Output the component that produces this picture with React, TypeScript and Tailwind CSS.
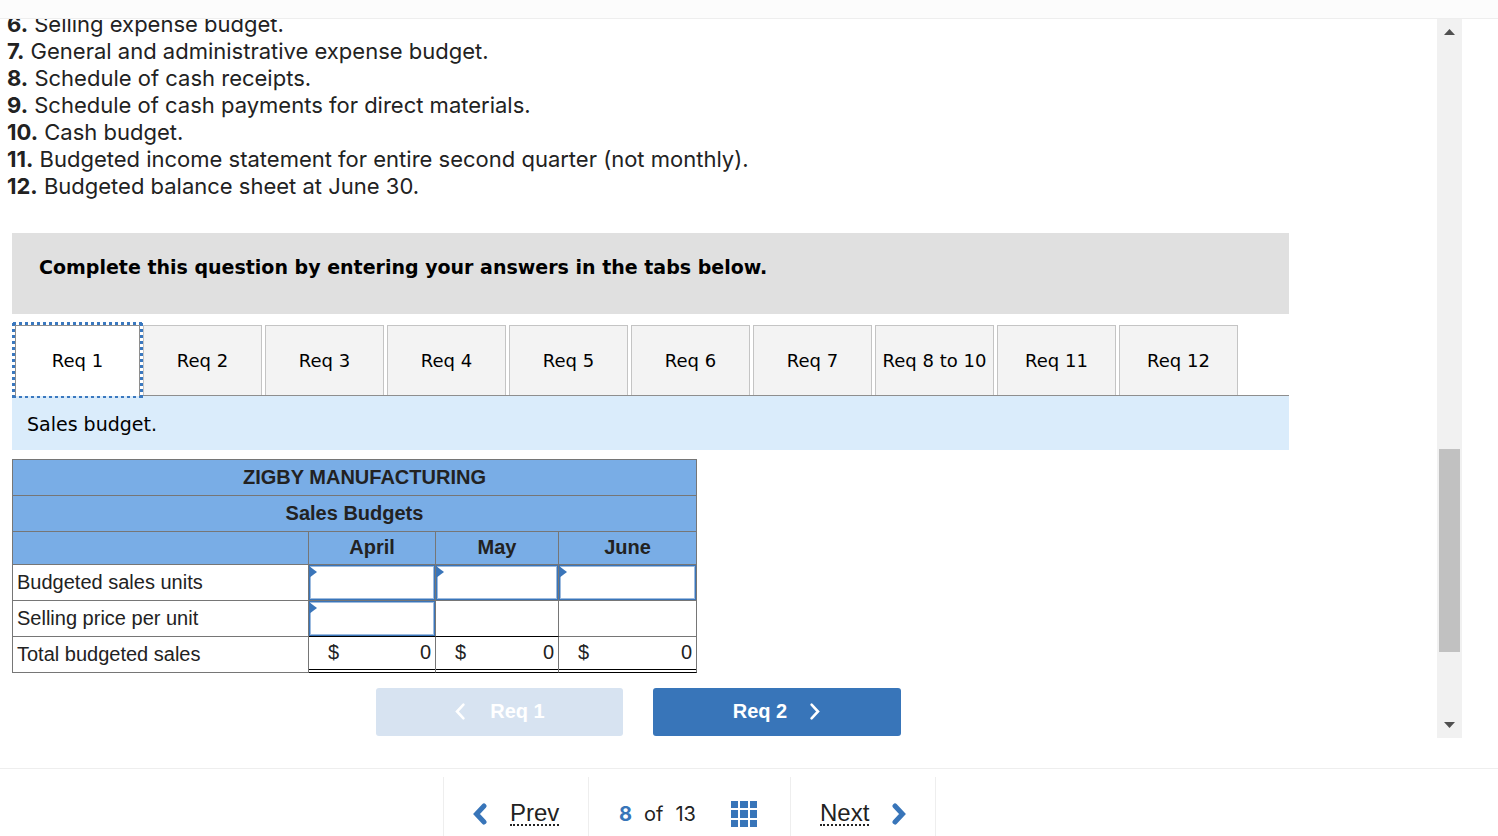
import React from "react";

const requirements = [
  { no: 6, text: "Selling expense budget." },
  { no: 7, text: "General and administrative expense budget." },
  { no: 8, text: "Schedule of cash receipts." },
  { no: 9, text: "Schedule of cash payments for direct materials." },
  { no: 10, text: "Cash budget." },
  { no: 11, text: "Budgeted income statement for entire second quarter (not monthly)." },
  { no: 12, text: "Budgeted balance sheet at June 30." },
];

const tabs = ["Req 1", "Req 2", "Req 3", "Req 4", "Req 5", "Req 6", "Req 7", "Req 8 to 10", "Req 11", "Req 12"];

const Chevron = ({ dir, className, thick }: { dir: "left" | "right"; className: string; thick: number }) => (
  <svg viewBox="0 0 14 22" className={className} fill="none" stroke="currentColor" strokeWidth={thick} strokeLinecap="round" aria-hidden="true">
    <path d={dir === "left" ? "M11 3 L3.5 11 L11 19" : "M3 3 L10.5 11 L3 19"} />
  </svg>
);

// dotted focus ring around the selected tab
const FocusRing = () => (
  <svg className="absolute -inset-x-1 -top-1 h-[76px] w-[131px] pointer-events-none" stroke="#3a78bf" strokeDasharray="3 3" aria-hidden="true">
    <line x1="0" y1="1.5" x2="131" y2="1.5" strokeWidth="3" strokeDashoffset="-1" />
    <line x1="0" y1="75" x2="131" y2="75" strokeWidth="2" strokeDashoffset="-1" />
    <line x1="1.5" y1="0" x2="1.5" y2="76" strokeWidth="3" strokeDashoffset="-1" />
    <line x1="129.5" y1="0" x2="129.5" y2="76" strokeWidth="3" strokeDashoffset="-1" />
  </svg>
);

const EntryCell = ({ label, last }: { label: string; last?: string }) => (
  <td className={`relative p-0 border-r border-b border-r-[#767676] ${last || "border-b-[#767676]"}`}>
    <input
      type="text"
      aria-label={label}
      className="block w-full h-[35px] px-2 text-right bg-white border border-[#3a75b9] shadow-[inset_0_0_0_1px_#9dbbdf] outline-none"
    />
    <svg viewBox="0 0 8 12" className="absolute left-0 top-px w-2 h-3" aria-hidden="true">
      <path d="M0 0 L8 6 L0 12 Z" fill="#3a75b9" />
    </svg>
  </td>
);

const TotalCell = () => (
  <td className="p-0 h-9 border-r border-b border-r-[#767676] border-b-black align-top">
    <div className="flex justify-between h-[33px] pl-[19px] pr-1 leading-[30px] border-b border-black">
      <span>$</span>
      <span>0</span>
    </div>
  </td>
);

const BudgetTable = () => (
  <table className="table-fixed w-[685px] mt-[9px] border-separate border-spacing-0 border-t border-l border-[#767676] font-['Liberation_Sans',Arial,sans-serif] text-xl leading-6 text-[#222]">
    <colgroup>
      <col className="w-[296px]" />
      <col className="w-[127px]" />
      <col className="w-[123px]" />
      <col />
    </colgroup>
    <thead className="bg-[#79ade6]">
      <tr>
        <th colSpan={4} className="h-9 p-0 pl-5 pb-0.5 border-r border-b border-[#767676]">ZIGBY MANUFACTURING</th>
      </tr>
      <tr>
        <th colSpan={4} className="h-9 p-0 pb-0.5 border-r border-b border-[#767676]">Sales Budgets</th>
      </tr>
      <tr>
        <td className="h-[33px] border-r border-b border-[#767676]"></td>
        <th className="p-0 pb-0.5 border-r border-b border-[#767676]">April</th>
        <th className="p-0 pb-0.5 border-r border-b border-[#767676]">May</th>
        <th className="p-0 pb-0.5 border-r border-b border-[#767676]">June</th>
      </tr>
    </thead>
    <tbody>
      <tr>
        <th scope="row" className="h-9 p-0 pl-1 pb-0.5 text-left font-normal border-r border-b border-[#767676]">Budgeted sales units</th>
        <EntryCell label="Budgeted sales units, April" />
        <EntryCell label="Budgeted sales units, May" />
        <EntryCell label="Budgeted sales units, June" />
      </tr>
      <tr>
        <th scope="row" className="h-9 p-0 pl-1 pb-0.5 text-left font-normal border-r border-b border-[#767676]">Selling price per unit</th>
        <EntryCell label="Selling price per unit, April" last="border-b-black" />
        <td className="border-r border-b border-r-[#767676] border-b-black"></td>
        <td className="border-r border-b border-[#767676]"></td>
      </tr>
      <tr>
        <th scope="row" className="h-9 p-0 pl-1 pb-0.5 text-left font-normal border-r border-b border-[#767676]">Total budgeted sales</th>
        <TotalCell />
        <TotalCell />
        <TotalCell />
      </tr>
    </tbody>
  </table>
);

const ScrollBar = () => (
  <div className="flex flex-col items-center w-[25px] shrink-0 mr-9 bg-[#f1f1f1]">
    <svg viewBox="0 0 11 6" className="w-[11px] h-[6px] mt-[10px]" fill="#505050" aria-hidden="true">
      <path d="M5.5 0 L11 6 H0 Z" />
    </svg>
    <div className="grow-[414]" />
    <div className="w-[21px] h-[203px] bg-[#c1c1c1]" />
    <div className="grow-[70]" />
    <svg viewBox="0 0 11 6" className="w-[11px] h-[6px] mb-[10px]" fill="#505050" aria-hidden="true">
      <path d="M5.5 6 L11 0 H0 Z" />
    </svg>
  </div>
);

const App = () => {
  return (
    <div className="flex flex-col min-h-screen bg-white text-[#222]">
      <header className="h-[19px] bg-[#fcfcfc] border-b border-[#eee]" />

      <main className="flex grow">
        <div className="grow min-w-0 overflow-hidden">
          <ul className="-mt-2 pl-[7px] font-['Inter',sans-serif] text-[22px] leading-[27px]">
            {requirements.map((r) => (
              <li key={r.no}>
                <b>{r.no}.</b> {r.text}
              </li>
            ))}
          </ul>

          <section className="ml-3 mr-[148px] mt-[33px] font-['DejaVu_Sans',Verdana,sans-serif] text-black">
            <div className="h-[81px] px-[27px] pt-5 bg-[#e0e0e0] text-[19px] leading-7 font-bold">
              Complete this question by entering your answers in the tabs below.
            </div>

            <div role="tablist" className="flex gap-[3px] pl-[3px] mt-[11px] text-lg">
              {tabs.map((tab, i) =>
                i === 0 ? (
                  <button key={tab} role="tab" aria-selected="true" className="relative z-10 w-[125px] h-[71px] -mb-px bg-white border border-b-0 border-[#8e8e8e] outline-none">
                    {tab}
                    <FocusRing />
                  </button>
                ) : (
                  <button key={tab} role="tab" aria-selected="false" className="w-[119px] h-[70px] bg-[#f3f3f3] border border-b-0 border-[#c4c4c4] whitespace-nowrap">
                    {tab}
                  </button>
                )
              )}
            </div>
            <div className="h-[55px] px-[15px] pt-3.5 bg-[#daecfb] border-t border-[#8e8e8e] text-[19px] leading-7">Sales budget.</div>

            <BudgetTable />
          </section>

          <div className="flex justify-center gap-[30px] mt-[15px] pr-[160px] font-['Liberation_Sans',Arial,sans-serif] text-xl font-bold text-white">
            <button disabled className="flex items-center justify-center gap-6 w-[247px] h-12 pb-0.5 rounded-[3px] bg-[#d7e3f1]">
              <Chevron dir="left" thick={3} className="w-3 h-[19px]" />
              Req 1
            </button>
            <button className="flex items-center justify-center gap-[22px] w-[248px] h-12 pb-0.5 rounded-[3px] bg-[#3875b9]">
              Req 2
              <Chevron dir="right" thick={3} className="w-3 h-[19px]" />
            </button>
          </div>
        </div>

        <ScrollBar />
      </main>

      <footer className="flex justify-center mt-[30px] pt-2 pr-[119px] border-t border-[#eee] h-[68px] font-['Liberation_Sans',Arial,sans-serif]">
        <nav className="flex text-2xl text-[#222]">
          <a href="#prev" className="flex items-center gap-[23px] w-[145px] pl-[29px] pt-3.5 border-l border-[#eee]">
            <Chevron dir="left" thick={5} className="w-3.5 h-[22px] text-[#3875b9]" />
            <span className="leading-[22px] border-b-2 border-dotted border-[#222]">Prev</span>
          </a>
          <div className="flex items-center w-[202px] pl-[30px] pt-3.5 border-l border-[#eee] font-['Inter',sans-serif] text-xl">
            <b className="text-[#3875b9]">8</b>
            <span className="ml-3">of</span>
            <span className="ml-3">13</span>
            <button aria-label="Question list" className="ml-[35px]">
              <svg viewBox="0 0 26 26" className="w-[26px] h-[26px]" fill="#3875b9" aria-hidden="true">
                {[0, 9, 19].map((y) => [0, 9, 19].map((x) => <rect key={`${x}-${y}`} x={x} y={y} width={x === 9 ? 8 : 7} height={y === 9 ? 8 : 7} />))}
              </svg>
            </button>
          </div>
          <a href="#next" className="flex items-center gap-[23px] w-[146px] pl-[29px] pt-3.5 border-x border-[#eee]">
            <span className="leading-[22px] border-b-2 border-dotted border-[#222]">Next</span>
            <Chevron dir="right" thick={5} className="w-3.5 h-[22px] text-[#3875b9]" />
          </a>
        </nav>
      </footer>
    </div>
  );
};

export default App;
